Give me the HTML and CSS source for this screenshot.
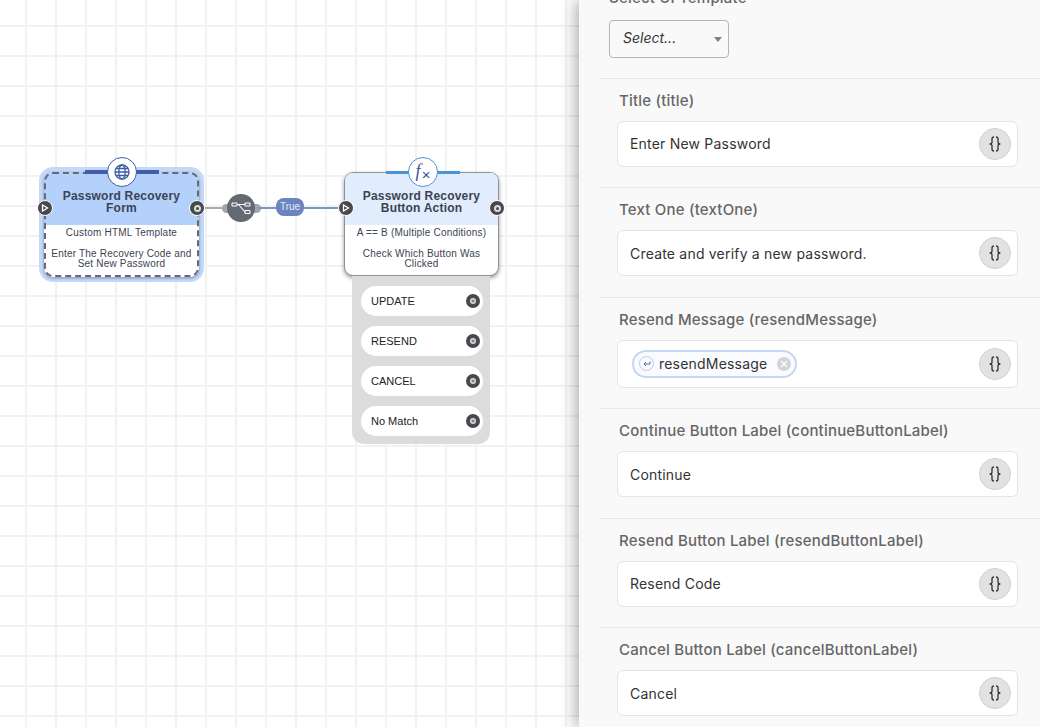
FILE: index.html
```html
<!DOCTYPE html>
<html>
<head>
	<title>Password Recovery Flow</title>
	<link rel="stylesheet" href="styles.css">
</head>
<body>
	<svg class="defs" width="0" height="0">
		<symbol id="braces" viewBox="0 0 14 18">
			<path d="M6 2C4.6 2 4 2.7 4 4v3.2C4 8.2 3.2 9 1.6 9 3.2 9 4 9.800 4 10.800V14c0 1.300.6 2 2 2M8 2c1.400 0 2 .7 2 2v3.200c0 1 .8 1.800 2.400 1.800-1.600 0-2.400.8-2.400 1.800V14c0 1.300-.6 2-2 2" fill="none" stroke="#333" stroke-width="1.300"/>
		</symbol>
	</svg>
	<div class="page">
		<div class="canvas">
			<svg class="wires" width="579" height="727">
				<line x1="204" y1="208" x2="226" y2="208" stroke="#a9abae" stroke-width="2"/>
				<rect x="222" y="204" width="39" height="9" rx="4.5" fill="#a3a5a8"/>
				<line x1="258" y1="208" x2="340" y2="208" stroke="#7d94c6" stroke-width="2"/>
			</svg>

			<div class="node node-form">
				<div class="node-head">Password Recovery<br>Form</div>
				<div class="node-body">
					<p>Custom HTML Template</p>
					<p>Enter The Recovery Code and Set New Password</p>
				</div>
				<div class="node-bar"></div>
				<div class="node-icon">
					<svg width="18" height="18" viewBox="0 0 18 18" fill="none" stroke="#3f5da8" stroke-width="1.3">
						<circle cx="9" cy="9" r="7"/>
						<ellipse cx="9" cy="9" rx="3.2" ry="7"/>
						<path d="M2 9h14M3 5.5h12M3 12.5h12"/>
					</svg>
				</div>
				<span class="port port-in"><svg width="8" height="8" viewBox="0 0 8 8"><path d="M1.5 1l5 3-5 3z" fill="none" stroke="#fff" stroke-width="1.3"/></svg></span>
				<span class="port port-out"></span>
			</div>

			<div class="node node-action">
				<div class="node-head">Password Recovery<br>Button Action</div>
				<div class="node-body">
					<p>A == B (Multiple Conditions)</p>
					<p>Check Which Button Was Clicked</p>
				</div>
				<div class="node-bar"></div>
				<div class="node-icon node-icon-fx">
					<span class="fx-f">f</span><span class="fx-x">×</span>
				</div>
				<span class="port port-in"><svg width="8" height="8" viewBox="0 0 8 8"><path d="M1.5 1l5 3-5 3z" fill="none" stroke="#fff" stroke-width="1.3"/></svg></span>
				<span class="port port-out"></span>
			</div>

			<div class="branches">
				<div class="branch">UPDATE<span class="dot"></span></div>
				<div class="branch">RESEND<span class="dot"></span></div>
				<div class="branch">CANCEL<span class="dot"></span></div>
				<div class="branch">No Match<span class="dot"></span></div>
			</div>

			<div class="link-icon">
				<svg width="20" height="16" viewBox="0 0 20 16" fill="none" stroke="#fff" stroke-width="1.1">
					<rect x="1" y="3" width="5" height="3" rx=".8"/>
					<rect x="14" y="3" width="5" height="3" rx=".8"/>
					<rect x="14" y="10.5" width="5" height="3" rx=".8"/>
					<path d="M6 4.5h8M7.5 4.5l6.5 7.5"/>
				</svg>
			</div>
			<div class="link-label">True</div>
		</div>

		<div class="panel">
			<div class="group-first">
				<label class="cut-label">Select UI Template</label>
				<div class="select">Select...<span class="caret"></span></div>
			</div>

			<div class="row">
				<label>Title (title)</label>
				<div class="field">Enter New Password<span class="braces"><svg width="14" height="18"><use href="#braces"/></svg></span></div>
			</div>
			<div class="row">
				<label>Text One (textOne)</label>
				<div class="field">Create and verify a new password.<span class="braces"><svg width="14" height="18"><use href="#braces"/></svg></span></div>
			</div>
			<div class="row">
				<label>Resend Message (resendMessage)</label>
				<div class="field field-tag">
					<span class="tag">
						<span class="tag-icon">
							<svg width="10" height="10" viewBox="0 0 10 10" fill="none" stroke="#4a6cb3" stroke-width="1"><path d="M8 2.5v2.5H2M4 3L2 5l2 2"/></svg>
						</span>
						resendMessage
						<span class="tag-x">
							<svg width="8" height="8" viewBox="0 0 8 8" stroke="#fff" stroke-width="1.2"><path d="M1 1l6 6M7 1L1 7"/></svg>
						</span>
					</span>
					<span class="braces"><svg width="14" height="18"><use href="#braces"/></svg></span>
				</div>
			</div>
			<div class="row">
				<label>Continue Button Label (continueButtonLabel)</label>
				<div class="field">Continue<span class="braces"><svg width="14" height="18"><use href="#braces"/></svg></span></div>
			</div>
			<div class="row">
				<label>Resend Button Label (resendButtonLabel)</label>
				<div class="field">Resend Code<span class="braces"><svg width="14" height="18"><use href="#braces"/></svg></span></div>
			</div>
			<div class="row">
				<label>Cancel Button Label (cancelButtonLabel)</label>
				<div class="field">Cancel<span class="braces"><svg width="14" height="18"><use href="#braces"/></svg></span></div>
			</div>
		</div>
	</div>
</body>
</html>
```

FILE: styles.css
```css
html, body {
	margin: 0;
	height: 727px;
	overflow: hidden;
}
body {
	font-family: "Liberation Sans", Arial, sans-serif;
	background-color: white;
}
.defs {
	position: absolute;
}
.page {
	display: flex;
	height: 727px;
}

/* canvas */
.canvas {
	position: relative;
	width: 579px;
	flex: none;
	overflow: hidden;
	background-color: white;
	background-image:
		linear-gradient(to right, #f2f2f2 2px, transparent 2px),
		linear-gradient(to bottom, #f2f2f2 2px, transparent 2px);
	background-size: 30px 30px;
	background-position: 25px 25px;
}
.wires {
	position: absolute;
	left: 0;
	top: 0;
}
.node {
	position: absolute;
	width: 155px;
	height: 104px;
	box-sizing: border-box;
	border-radius: 9px;
	background-color: white;
	color: #3c4352;
	text-align: center;
}
.node-form {
	left: 44px;
	top: 172px;
	height: 105px;
	box-shadow: 0 1px 2px 1px rgba(0, 0, 0, .2), 0 0 0 5px #c2d9fa;
}
.node-form::after {
	content: "";
	position: absolute;
	inset: 0;
	border: 2px dashed #666a70;
	border-radius: 9px;
}
.node-action {
	left: 344px;
	top: 172px;
	border: 1px solid #8e9196;
	box-shadow: 0 2px 4px rgba(0, 0, 0, .4);
}
.node-head {
	height: 52px;
	box-sizing: border-box;
	padding-top: 17px;
	font-size: 12px;
	line-height: 12px;
	font-weight: bold;
	letter-spacing: .2px;
	border-radius: 8px 8px 0 0;
}
.node-form .node-head {
	height: 53px;
	padding-top: 18px;
	background-color: #b3d1fb;
}
.node-action .node-head {
	background-color: #e1edfc;
}
.node-body {
	padding: 3px 4px 0;
	font-size: 10px;
	line-height: 10px;
	letter-spacing: .2px;
}
.node-body p {
	margin: 0 0 11px;
}
.node-bar {
	position: absolute;
	left: 41px;
	top: -2px;
	width: 74px;
	height: 4px;
	z-index: 1;
	background-color: #3f5da8;
}
.node-action .node-bar {
	height: 3px;
	background-color: #4a94d6;
}
.node-icon {
	position: absolute;
	left: 63px;
	top: -15px;
	width: 30px;
	height: 30px;
	z-index: 2;
	box-sizing: border-box;
	display: flex;
	align-items: center;
	justify-content: center;
	border-radius: 50%;
	background-color: white;
	border: 1px solid #3f5da8;
}
.node-icon-fx {
	top: -16px;
	border-color: #4a94d6;
	color: #3d4f9e;
}
.fx-f {
	font-family: "Liberation Serif", serif;
	font-style: italic;
	font-size: 18px;
	line-height: 18px;
	margin-top: -2px;
}
.fx-x {
	font-size: 15px;
	line-height: 12px;
	margin: 5px 0 0 1px;
}
.port {
	position: absolute;
	top: 28px;
	width: 16px;
	height: 16px;
	z-index: 2;
	box-sizing: border-box;
	display: flex;
	align-items: center;
	justify-content: center;
	border-radius: 50%;
	background-color: #48494c;
	border: 1.5px solid white;
}
.port-in {
	left: -7px;
}
.port-out {
	right: -6px;
}
.port-out::after {
	content: "";
	width: 3px;
	height: 3px;
	border-radius: 50%;
	background-color: #48494c;
	border: 2px solid #dcdcdc;
}
.node-action .port {
	top: 27px;
}
.node-action .port-out {
	right: -7px;
}
.branches {
	position: absolute;
	left: 352px;
	top: 276px;
	width: 138px;
	height: 168px;
	box-sizing: border-box;
	padding-top: 10px;
	display: flex;
	flex-direction: column;
	gap: 10px;
	background-color: #dcdcdc;
	border-radius: 0 0 12px 12px;
}
.branch {
	display: flex;
	align-items: center;
	justify-content: space-between;
	height: 30px;
	margin: 0 7px 0 9px;
	padding: 0 3px 0 10px;
	background-color: white;
	border-radius: 15px;
	font-size: 11px;
	color: #222;
}
.dot {
	width: 6px;
	height: 6px;
	border: 4px solid #48494c;
	border-radius: 50%;
	background: radial-gradient(circle, #8a8a8a 1px, #dedede 2px);
}
.link-icon {
	position: absolute;
	left: 227px;
	top: 194px;
	width: 28px;
	height: 28px;
	display: flex;
	align-items: center;
	justify-content: center;
	border-radius: 50%;
	background-color: #646a72;
}
.link-label {
	position: absolute;
	left: 276px;
	top: 198px;
	width: 28px;
	height: 18px;
	line-height: 17px;
	text-align: center;
	border-radius: 8px;
	background-color: #6c85bf;
	color: #e4eaf6;
	font-size: 10px;
}

/* side panel */
.panel {
	flex: 1;
	padding-left: 21px;
	height: 727px;
	overflow: hidden;
	background-color: #f9f9fa;
	box-shadow: -4px 0 14px rgba(0, 0, 0, .3);
	position: relative;
	font-family: Inter, "Noto Sans", sans-serif;
}
.group-first {
	height: 77.9px;
	box-sizing: border-box;
	padding: 20px 0 0 9px;
	position: relative;
}
.cut-label {
	position: absolute;
	left: 9px;
	top: -11px;
	font-size: 15px;
	line-height: 17px;
	letter-spacing: .2px;
	font-weight: 500;
	color: #666;
}
.select {
	position: relative;
	width: 120px;
	height: 38px;
	box-sizing: border-box;
	padding-left: 13px;
	line-height: 34px;
	border: 1px solid #b5b5b5;
	border-radius: 4px;
	font-size: 14px;
	font-style: italic;
	color: #333;
}
.caret {
	position: absolute;
	right: 6px;
	top: 16px;
	border: 4.5px solid transparent;
	border-top: 5px solid #808080;
	border-bottom: 0;
}
.row {
	border-top: 1px solid #e6e8ee;
	padding: 13px 22px 20.4px 17px;
}
.row label {
	display: block;
	height: 18px;
	margin-bottom: 11.1px;
	padding-left: 2px;
	font-size: 15px;
	line-height: 18px;
	letter-spacing: .2px;
	font-weight: 500;
	color: #666;
}
.field {
	display: flex;
	align-items: center;
	justify-content: space-between;
	height: 46px;
	box-sizing: border-box;
	padding: 0 6px 0 12px;
	background-color: white;
	border: 1px solid #e4e4e4;
	border-radius: 6px;
	font-size: 14px;
	letter-spacing: .2px;
	color: #333;
}
.field-tag {
	height: 48px;
	padding-left: 14px;
}
.braces {
	width: 32px;
	height: 32px;
	box-sizing: border-box;
	display: flex;
	align-items: center;
	justify-content: center;
	border-radius: 50%;
	background-color: #e3e2e2;
	border: 1px solid #d3cfcf;
}
.tag {
	display: flex;
	align-items: center;
	height: 28px;
	box-sizing: border-box;
	padding: 0 4px 0 5px;
	background-color: #f9fbfe;
	border: 2px solid #c5d8f3;
	border-radius: 14px;
	color: #333;
}
.tag-icon {
	width: 15px;
	height: 15px;
	box-sizing: border-box;
	margin-right: 5px;
	display: flex;
	align-items: center;
	justify-content: center;
	border-radius: 50%;
	border: 1px solid #b6cbea;
}
.tag-x {
	width: 14px;
	height: 14px;
	margin-left: 10px;
	display: flex;
	align-items: center;
	justify-content: center;
	border-radius: 50%;
	background-color: #d4d4d4;
}
```
